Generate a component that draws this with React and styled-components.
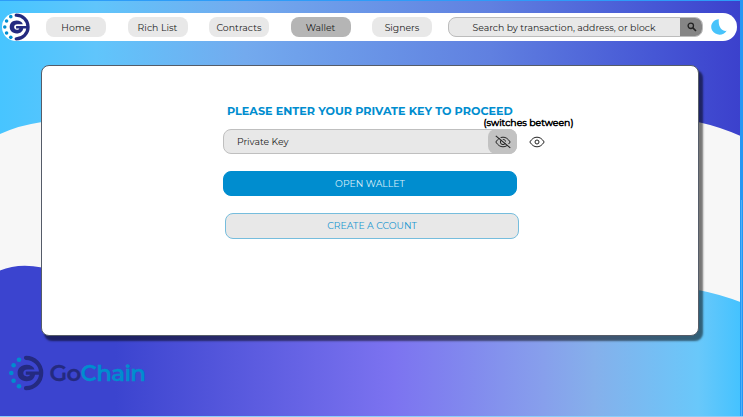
import React from "react";
import styled, { createGlobalStyle } from "styled-components";

const Global = createGlobalStyle`
  * { box-sizing: border-box; }
  body { margin: 0; overflow: hidden; font-family: Montserrat, Inter, "Liberation Sans", sans-serif; }
`;

const Page = styled.div`
  position: relative;
  width: 743px;
  height: 417px;
  overflow: hidden;
`;

const Backdrop = styled.svg`
  position: absolute;
  inset: 0;
  z-index: -1;
`;

const Nav = styled.nav`
  display: flex;
  align-items: center;
  width: 735px;
  height: 28px;
  margin: 13px 0 0 2px;
  border-radius: 14px;
  background: #fff;
`;

const NavMark = styled.div`
  width: 28px;
  height: 28px;
  padding-left: 0.5px;
  margin-right: 16px;
`;

const Tabs = styled.div`
  display: flex;
  gap: 21.5px;
`;

const Label = styled.span`
  font-size: 9.3px;
  letter-spacing: ${(p) => p.$track || 0}px;
  white-space: nowrap;
  line-height: 12px;
`;

const Tab = styled.button`
  display: flex;
  align-items: center;
  justify-content: center;
  width: 60px;
  height: 20px;
  padding: 1px 0 0;
  border: 0;
  border-radius: 8px;
  font-family: inherit;
  color: #1c1c1c;
  background: ${(p) => (p.$active ? "#b5b5b5" : "#e8e8e8")};
`;

const Search = styled.div`
  display: flex;
  width: 255px;
  height: 20px;
  margin-left: 16px;
  border: 1px solid #bcbcbc;
  border-radius: 8px;
  overflow: hidden;
  background: #e8e8e8;
  color: #1c1c1c;
`;

const SearchText = styled.div`
  display: flex;
  flex: 1;
  align-items: center;
  padding: 1px 0 0 23.5px;
`;

const SearchButton = styled.div`
  display: flex;
  align-items: center;
  justify-content: center;
  width: 23px;
  margin-right: -1px;
  background: #858585;
`;

const Moon = styled.svg`
  margin-left: 7.5px;
`;

const Card = styled.main`
  display: flex;
  flex-direction: column;
  width: 658px;
  height: 271px;
  margin: 24px 0 0 41px;
  padding: 38px 0 0 181px;
  border: 1px solid #555c68;
  border-radius: 8px;
  background: #fff;
  box-shadow: 3.5px 5px 2px rgba(0, 0, 0, 0.52);
`;

const Title = styled.h1`
  margin: 0 0 11px 4px;
  height: 14px;
  font-size: 11.2px;
  font-weight: 700;
  line-height: 14px;
  letter-spacing: 0.01px;
  white-space: nowrap;
  color: #008dcf;
`;

const FieldRow = styled.div`
  position: relative;
  display: flex;
  align-items: center;
  gap: 12px;
  margin-bottom: 17px;
`;

const Field = styled.div`
  display: flex;
  align-items: center;
  justify-content: space-between;
  width: 294px;
  height: 25px;
  padding-left: 13px;
  border: 1px solid #bfbfbf;
  border-radius: 8px;
  color: #1c1c1c;
  background: #e8e8e8;
`;

const Toggle = styled.div`
  display: flex;
  align-items: center;
  justify-content: center;
  width: 29px;
  height: 25px;
  margin-right: -1px;
  border-radius: 8px;
  background: #c2c2c2;
`;

const Note = styled.div`
  position: absolute;
  left: 260.5px;
  top: -12px;
  display: flex;
  color: #000;
  -webkit-text-stroke: 0.5px #000;
`;

const Action = styled.button`
  display: flex;
  align-items: center;
  justify-content: center;
  width: 294px;
  height: ${(p) => (p.$outlined ? 26 : 25)}px;
  padding: 0;
  border: 1px solid ${(p) => (p.$outlined ? "#76bddd" : "#008dcf")};
  border-radius: 8px;
  margin: 0 0 17px ${(p) => (p.$outlined ? 2 : 0)}px;
  font-family: inherit;
  color: ${(p) => (p.$outlined ? "#1997d0" : "#d9eef8")};
  background: ${(p) => (p.$outlined ? "#e8e8e8" : "#008dcf")};
`;

const Footer = styled.footer`
  display: flex;
  align-items: center;
  gap: 4.5px;
  margin: 18.5px 0 0 9px;
`;

const Wordmark = styled.div`
  padding-top: 1px;
  font-size: 22.8px;
  line-height: 28px;
  font-weight: 600;
  letter-spacing: -0.65px;
  color: #242a80;
  -webkit-text-stroke: 0.3px currentColor;
`;

const Accent = styled.span`
  color: #008dcf;
  -webkit-text-stroke-color: #008dcf;
`;

const MarkSvg = styled.svg`
  display: block;
`;

function Mark({ size }) {
  return (
    <MarkSvg width={size} height={size} viewBox="0 0 36 36">
      <path d="M17 2.8A15.2 15.2 0 0 1 17 33.2" fill="none" stroke="#242a80" strokeWidth="4.2" strokeLinecap="round" />
      <path
        d="M25.5 14.4H18.5C15.8 14.4 14.3 16 14.3 18.1S15.8 21.4 18 21.4C19.8 21.4 20.6 20.8 21 19.8H16.8V16.6H32V19.8H26C25.5 23.6 22.5 26.2 17.5 26.2C12 26.2 8.6 22.8 8.6 18.1S12 9.8 17.5 9.8C21.5 9.8 24.4 11.4 25.5 14.4Z"
        fill="#242a80"
      />
      {[[10, 4.7], [4.6, 10.3], [2.3, 18], [4.6, 25.7], [10, 31.3]].map(([x, y]) => (
        <circle key={y} cx={x} cy={y} r="2.3" fill="#008dcf" />
      ))}
    </MarkSvg>
  );
}

function Eye({ off }) {
  return (
    <svg width="16" height="16" viewBox="0 0 16 16" fill="none" stroke="#222" strokeWidth="1">
      <path d="M.8 8C3 4.6 5.3 3.2 8 3.2S13 4.6 15.2 8C13 11.4 10.7 12.8 8 12.8S3 11.4.8 8Z" />
      <circle cx="8" cy="8" r={off ? 2.6 : 2} />
      {off && <path d="M1.8 1.2 16.3 13.2" stroke="#c2c2c2" strokeWidth="1.2" />}
      {off && <path d="M.8 1.8 15.3 13.9" strokeWidth="1.1" />}
    </svg>
  );
}

const tabs = [
  ["Home", 0.1],
  ["Rich List", 0.05],
  ["Contracts", 0.05],
  ["Wallet", 0],
  ["Signers", 0],
];

export default function App() {
  return (
    <Page>
      <Global />
      <Backdrop width="743" height="417" viewBox="0 0 743 417">
        <defs>
          <linearGradient id="top">
            <stop offset="0" stopColor="#47c5ff" />
            <stop offset=".13" stopColor="#60c5fb" />
            <stop offset=".33" stopColor="#73aaee" />
            <stop offset=".66" stopColor="#6080e0" />
            <stop offset=".88" stopColor="#4657d5" />
            <stop offset="1" stopColor="#3b40cc" />
          </linearGradient>
          <linearGradient id="bottom">
            <stop offset="0" stopColor="#3b44cf" />
            <stop offset=".155" stopColor="#3b44cf" />
            <stop offset=".53" stopColor="#7c73f0" />
            <stop offset=".73" stopColor="#879fec" />
            <stop offset=".8" stopColor="#85b0eb" />
            <stop offset=".94" stopColor="#69c8fa" />
            <stop offset="1" stopColor="#42c2ff" />
          </linearGradient>
        </defs>
        <rect width="743" height="417" fill="#f7f7f7" />
        <path d="M0 0H743V137Q721 127 698 122H42Q20 125 0 134Z" fill="url(#top)" />
        <path d="M0 270.5Q18 263 42 267.5L698 290Q720 294 743 303V417H0Z" fill="url(#bottom)" />
        <rect width="743" height="1" fill="#2d9cf8" />
        <rect x="740" width="3" height="417" fill="#2497f4" />
        <rect x="741" y="200" width="1" height="217" fill="#51b0fa" />
        <rect y="416" width="743" height="1" fill="#8dcdf7" />
      </Backdrop>
      <Nav>
        <NavMark><Mark size={28} /></NavMark>
        <Tabs>
          {tabs.map(([name, track]) => (
            <Tab key={name} $active={name === "Wallet"}>
              <Label $track={track}>{name}</Label>
            </Tab>
          ))}
        </Tabs>
        <Search>
          <SearchText><Label>Search by transaction, address, or block</Label></SearchText>
          <SearchButton>
            <svg width="10" height="10" viewBox="0 0 10 10" fill="none" stroke="#222" strokeWidth="1.3">
              <circle cx="3.8" cy="3.8" r="2.7" />
              <path d="M5.9 5.9 9 9" strokeWidth="1.6" />
            </svg>
          </SearchButton>
        </Search>
        <Moon width="16" height="16" viewBox="0 0 16 16">
          <path d="M7.8.3C1.5.8-1.5 7 1.2 11.6C4.5 17 12.5 17 15.6 11.8C11.5 12.6 7 8.5 7.8.3Z" fill="#47c3fb" />
        </Moon>
      </Nav>
      <Card>
        <Title>PLEASE ENTER YOUR PRIVATE KEY TO PROCEED</Title>
        <FieldRow>
          <Field>
            <Label>Private Key</Label>
            <Toggle><Eye off /></Toggle>
          </Field>
          <Eye />
          <Note><Label>(switches between)</Label></Note>
        </FieldRow>
        <Action><Label>OPEN WALLET</Label></Action>
        <Action $outlined><Label>CREATE A CCOUNT</Label></Action>
      </Card>
      <Footer>
        <Mark size={36} />
        <Wordmark>Go<Accent>Chain</Accent></Wordmark>
      </Footer>
    </Page>
  );
}
